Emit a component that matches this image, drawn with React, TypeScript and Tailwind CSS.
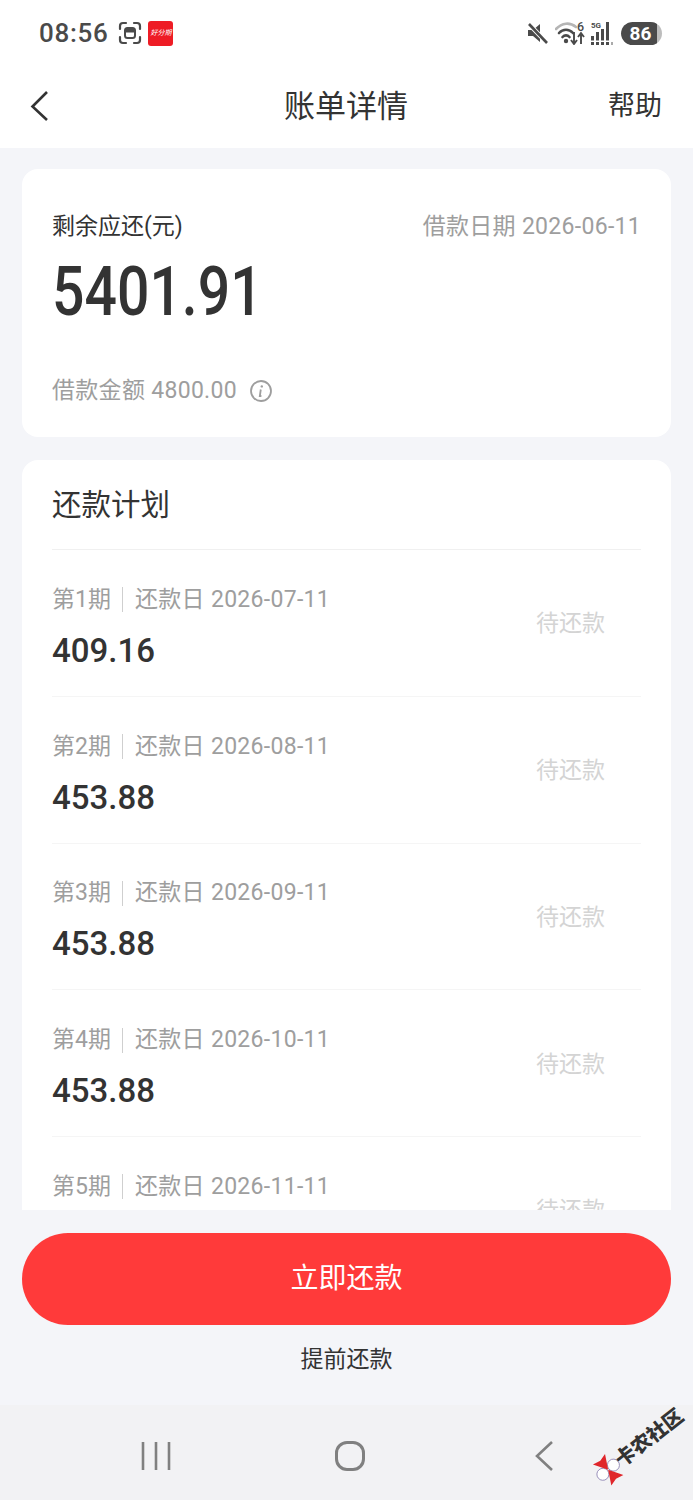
const CJK = "font-['Roboto','Noto_Sans_CJK_SC',sans-serif]";

type Plan = { period: number; date: string; amount: string };

const PLANS: Plan[] = [
  { period: 1, date: "2026-07-11", amount: "409.16" },
  { period: 2, date: "2026-08-11", amount: "453.88" },
  { period: 3, date: "2026-09-11", amount: "453.88" },
  { period: 4, date: "2026-10-11", amount: "453.88" },
  { period: 5, date: "2026-11-11", amount: "453.88" },
];

function StatusBar() {
  return (
    <div className="flex h-[66px] items-center justify-between pl-[39px] pr-[31px]">
      <div className="flex items-center">
        <span className="text-[26px] font-medium tracking-[0.7px] text-[#4a4a4a]">08:56</span>
        <svg width="24" height="24" viewBox="0 0 24 24" fill="none" className="ml-[10px]">
          <path
            d="M2 8V5a3 3 0 0 1 3-3h3M16 2h3a3 3 0 0 1 3 3v3M22 16v3a3 3 0 0 1-3 3h-3M8 22H5a3 3 0 0 1-3-3v-3"
            stroke="#4a4a4a"
            strokeWidth="2.2"
            strokeLinecap="round"
          />
          <rect x="7" y="7" width="10" height="10" rx="2.5" stroke="#4a4a4a" strokeWidth="2" />
          <rect x="8" y="8" width="8" height="3.5" fill="#4a4a4a" />
        </svg>
        <div className="ml-[6px] flex h-[25px] w-[25px] items-center justify-center overflow-hidden rounded-[3px] bg-[#ee1c25]">
          <span className="whitespace-nowrap text-[7px] italic leading-none text-white">好分期</span>
        </div>
      </div>
      <div className="flex items-center">
        <svg width="21" height="24" viewBox="0 0 21 24" fill="none">
          <path d="M1 9h5l7-6v18l-7-6H1z" fill="#4a4a4a" />
          <path d="M0 1l20 21" stroke="#fff" strokeWidth="4.5" />
          <path d="M2 3l18 19" stroke="#4a4a4a" strokeWidth="2.6" />
        </svg>
        <svg width="30" height="24" viewBox="0 0 30 24" fill="none" className="ml-[7px]">
          <path d="M1 8C7 1.5 15 1 21 6" stroke="#b5b5b5" strokeWidth="2.6" strokeLinecap="round" />
          <path d="M4 12c4-4.4 10-4.4 14 0" stroke="#4a4a4a" strokeWidth="2.6" strokeLinecap="round" />
          <path d="M7.5 16c2-2.2 5-2.2 7 0" stroke="#4a4a4a" strokeWidth="2.6" strokeLinecap="round" />
          <circle cx="11" cy="20" r="2.2" fill="#4a4a4a" />
          <path d="M19 11v12m-3-4l3 4 3-4" stroke="#4a4a4a" strokeWidth="1.9" />
          <path d="M26 23V12m-3 4l3-4 3 4" stroke="#4a4a4a" strokeWidth="1.9" />
          <text x="22" y="10" fontSize="12.5" fontWeight="500" fill="#4a4a4a">6</text>
        </svg>
        <svg width="22" height="24" viewBox="0 0 22 24" fill="none" className="ml-[6px]">
          <text x="0" y="7" fontSize="8" fontWeight="700" fill="#4a4a4a">5G</text>
          <rect x="0" y="15" width="3" height="4.5" fill="#4a4a4a" />
          <rect x="5" y="11" width="3" height="8.5" fill="#4a4a4a" />
          <rect x="10" y="8" width="3" height="11.5" fill="#4a4a4a" />
          <rect x="15" y="1" width="3" height="18.5" fill="#4a4a4a" />
          <path d="M0 21h3v3H0zM5 21h3v3H5zM10 21h3v3h-3zM15 21h3v3h-3z" fill="#4a4a4a" />
          <rect x="20" y="21" width="2" height="3" fill="#aaa" />
        </svg>
        <div className="ml-[8px] flex h-[23px] w-[41px] overflow-hidden rounded-full bg-[#bdbdbd]">
          <div className="flex h-full w-[36px] items-center justify-center rounded-l-full bg-[#4a4a4a] pl-[3px] text-[19px] font-bold leading-none text-white">
            86
          </div>
        </div>
      </div>
    </div>
  );
}

function Header() {
  return (
    <div className="grid h-[82px] grid-cols-3 items-center pl-[30px] pr-[31px] pb-[2px]">
      <svg width="19" height="32" viewBox="0 0 19 32" fill="none">
        <path d="M17 2L2.5 16.5 17 30" stroke="#333" strokeWidth="2.6" />
      </svg>
      <span className="whitespace-nowrap text-center text-[31px] leading-none text-[#333]">账单详情</span>
      <span className="text-right text-[27px] leading-none text-[#333]">帮助</span>
    </div>
  );
}

function SummaryCard() {
  return (
    <div className="h-[268px] rounded-[16px] bg-white px-[30px] pt-[43px]">
      <div className="flex items-center justify-between">
        <span className="text-[23px] leading-[30px] text-[#333]">剩余应还(元)</span>
        <span className="text-[23px] leading-[30px] tracking-[0.3px] text-[#9e9e9e]">借款日期 2026-06-11</span>
      </div>
      <div className="mt-[14px] origin-left scale-x-[0.84] text-[68px] font-medium leading-[72px] text-[#333]">
        5401.91
      </div>
      <div className="mt-[48px] flex items-center">
        <span className="text-[23px] leading-[30px] tracking-[0.3px] text-[#9e9e9e]">借款金额 4800.00</span>
        <svg width="24" height="24" viewBox="0 0 24 24" fill="none" className="ml-[12px]">
          <circle cx="12" cy="12" r="10" stroke="#9e9e9e" strokeWidth="1.8" />
          <circle cx="12.8" cy="7.4" r="1.2" fill="#9e9e9e" />
          <path d="M11.8 10.5l-1 6.5h1.6" stroke="#9e9e9e" strokeWidth="1.8" />
        </svg>
      </div>
    </div>
  );
}

function PlanRow({ plan }: { plan: Plan }) {
  return (
    <div className="flex h-[146.75px] items-center justify-between border-b border-[#f5f5f5]">
      <div className="pt-[9px]">
        <div className="flex items-center text-[23px] leading-[30px] text-[#9e9e9e]">
          <span className="w-[58px] whitespace-nowrap">第{plan.period}期</span>
          <span className="mx-[12px] h-[25px] w-px bg-[#cfcfcf]" />
          <span className="tracking-[0.3px]">还款日 {plan.date}</span>
        </div>
        <div className="mt-[17px] text-[33px] font-medium leading-[38px] text-[#333]">{plan.amount}</div>
      </div>
      <span className="mr-[36px] pt-[2px] text-[23px] leading-none text-[#d4d4d4]">待还款</span>
    </div>
  );
}

function PlanCard() {
  return (
    <div className="mt-[23px] rounded-t-[16px] bg-white px-[30px]">
      <div className="flex h-[90px] items-center border-b border-[#f0f0f0] pt-[1px] text-[29.5px] text-[#333]">还款计划</div>
      {PLANS.map((plan) => (
        <PlanRow key={plan.period} plan={plan} />
      ))}
    </div>
  );
}

function NavBar() {
  return (
    <div className="relative flex h-[95px] items-center bg-[#f2f2f4] pt-[7px]">
      <div className="flex w-full items-center pl-[141px]">
        <svg width="30" height="30" viewBox="0 0 30 30" fill="none">
          <path d="M2 1v28M15 1v28M28 1v28" stroke="#808080" strokeWidth="2.6" />
        </svg>
        <svg width="30" height="30" viewBox="0 0 30 30" fill="none" className="ml-[164px]">
          <rect x="1.5" y="1.5" width="27" height="27" rx="10.5" stroke="#808080" strokeWidth="3" />
        </svg>
        <svg width="20" height="32" viewBox="0 0 20 32" fill="none" className="ml-[169px]">
          <path d="M18 2L3 16l15 14" stroke="#808080" strokeWidth="2.6" />
        </svg>
      </div>
      {/* watermark sits over the nav bar */}
      <div className="absolute left-[585px] top-[26px] flex -rotate-[38deg] items-center">
        <svg width="30" height="30" viewBox="0 0 30 30">
          <g transform="rotate(87 15 15)">
            <circle cx="15" cy="8" r="6" fill="#fff" stroke="#8a7fb0" strokeWidth="0.8" />
            <circle cx="15" cy="22" r="6" fill="#fff" stroke="#8a7fb0" strokeWidth="0.8" />
            <path d="M15 15L1 7l2 8-2 8zM15 15l14-8-2 8 2 8z" fill="#e0262b" />
          </g>
        </svg>
        <span className="-ml-[3px] whitespace-nowrap text-[20px] font-black leading-none text-[#333]">卡农社区</span>
      </div>
    </div>
  );
}

export default function App() {
  return (
    <div className={`flex h-[1500px] w-[693px] flex-col overflow-hidden bg-[#f4f5f9] ${CJK}`}>
      <div className="shrink-0 bg-white">
        <StatusBar />
        <Header />
      </div>
      <div className="h-[1062px] shrink-0 overflow-hidden px-[22px] pt-[21px]">
        <SummaryCard />
        <PlanCard />
      </div>
      <div className="flex h-[195px] shrink-0 flex-col items-center px-[22px] pt-[23px]">
        <div className="flex h-[92px] w-full items-center justify-center rounded-full bg-[#ff3a3a] text-[28px] text-white">
          立即还款
        </div>
        <div className="mt-[20px] text-[23px] leading-[30px] text-[#333]">提前还款</div>
      </div>
      <NavBar />
    </div>
  );
}
